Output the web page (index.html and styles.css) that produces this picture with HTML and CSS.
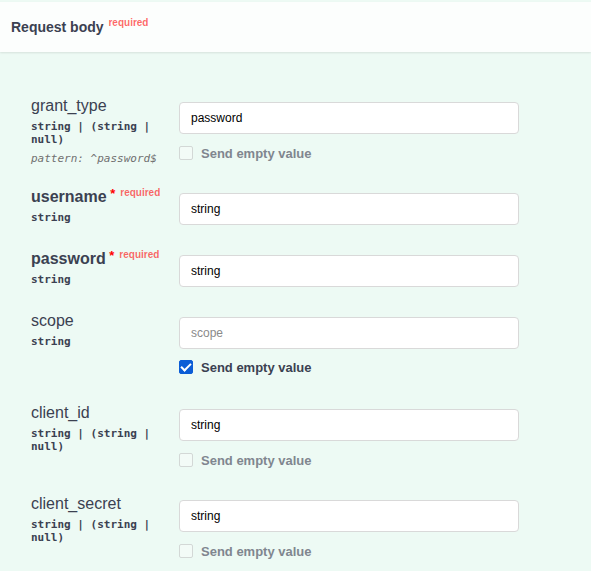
FILE: index.html
```html
<!DOCTYPE html>
<html>
<head>
<meta charset="utf-8">
<link rel="stylesheet" href="styles.css">
</head>
<body>
<div class="section">
  <div class="section-header">
    <h4 class="title">Request body <span class="req-badge">required</span></h4>
  </div>
  <div class="params">
    <div class="row">
      <div class="col-name">
        <div class="pname">grant_type</div>
        <div class="ptype">string | (string | null)</div>
        <div class="ppattern">pattern: ^password$</div>
      </div>
      <div class="col-desc">
        <input class="field" type="text" value="password">
        <label class="toggle disabled"><input type="checkbox" class="cb" disabled><span>Send empty value</span></label>
      </div>
    </div>
    <div class="row">
      <div class="col-name">
        <div class="pname required">username<span class="star">&nbsp;*</span><span class="req">required</span></div>
        <div class="ptype">string</div>
      </div>
      <div class="col-desc">
        <input class="field" type="text" value="string">
      </div>
    </div>
    <div class="row">
      <div class="col-name">
        <div class="pname required">password<span class="star">&nbsp;*</span><span class="req">required</span></div>
        <div class="ptype">string</div>
      </div>
      <div class="col-desc">
        <input class="field" type="text" value="string">
      </div>
    </div>
    <div class="row">
      <div class="col-name">
        <div class="pname">scope</div>
        <div class="ptype">string</div>
      </div>
      <div class="col-desc">
        <input class="field" type="text" placeholder="scope">
        <label class="toggle active"><input type="checkbox" class="cb" checked><span>Send empty value</span></label>
      </div>
    </div>
    <div class="row">
      <div class="col-name">
        <div class="pname">client_id</div>
        <div class="ptype">string | (string | null)</div>
      </div>
      <div class="col-desc">
        <input class="field" type="text" value="string">
        <label class="toggle disabled"><input type="checkbox" class="cb" disabled><span>Send empty value</span></label>
      </div>
    </div>
    <div class="row">
      <div class="col-name">
        <div class="pname">client_secret</div>
        <div class="ptype">string | (string | null)</div>
      </div>
      <div class="col-desc">
        <input class="field" type="text" value="string">
        <label class="toggle disabled"><input type="checkbox" class="cb" disabled><span>Send empty value</span></label>
      </div>
    </div>
  </div>
</div>
</body>
</html>
```

FILE: styles.css
```css
html, body {
  margin: 0;
  padding: 0;
}
body {
  background: #edfaf4;
  font-family: "Liberation Sans", Arial, sans-serif;
  color: #3b4151;
  width: 591px;
  height: 571px;
  overflow: hidden;
}
.section {
  padding-top: 2px;
}
.section-header {
  display: flex;
  align-items: center;
  height: 50px;
  padding: 0 11px;
  background: rgba(255, 255, 255, 0.8);
  box-shadow: 0 1px 2px rgba(0, 0, 0, 0.1);
}
.title {
  margin: 0;
  font-size: 14px;
  font-weight: bold;
  color: #3b4151;
}
.req-badge {
  font-size: 10px;
  color: rgba(255, 0, 0, 0.6);
  position: relative;
  top: -6px;
  margin-left: 1px;
}
.params {
  padding: 35px 0 0 31px;
}
.row {
  display: grid;
  grid-template-columns: 148px 340px;
  align-items: start;
}
.col-name {
  padding: 10px 0;
}
.pname {
  font-size: 16px;
  line-height: 18px;
  height: 18px;
  color: #3b4151;
}
.pname.required {
  font-weight: bold;
}
.star {
  color: red;
  font-size: 13px;
  line-height: 0;
  position: relative;
  top: -4px;
}
.req {
  font-size: 10px;
  font-weight: bold;
  line-height: 0;
  color: rgba(255, 0, 0, 0.6);
  position: relative;
  top: -6px;
  padding-left: 5px;
}
.ptype {
  font-family: "DejaVu Sans Mono", monospace;
  font-weight: bold;
  font-size: 11px;
  line-height: 13px;
  padding: 5px 20px 5px 0;
  color: #3b4151;
}
.ppattern {
  font-family: "DejaVu Sans Mono", monospace;
  font-style: italic;
  font-size: 11px;
  line-height: 13px;
  margin-top: 1px;
  color: #707070;
}
.col-desc {
  display: flex;
  flex-direction: column;
  padding: 10px 0;
}
.field {
  box-sizing: border-box;
  width: 340px;
  height: 32px;
  margin: 5px 0;
  padding: 0 11px;
  border: 1px solid #d9d9d9;
  border-radius: 4px;
  background: #fff;
  font-family: "Liberation Sans", Arial, sans-serif;
  font-size: 12px;
  color: #000;
  outline: none;
}
.field::placeholder {
  color: #8a8a8a;
}
.toggle {
  display: flex;
  align-items: flex-start;
  height: 29px;
  box-sizing: border-box;
  padding-top: 7px;
  font-size: 13px;
  line-height: 15px;
  font-weight: bold;
  color: #3b4151;
}
.toggle.active {
  height: 30px;
  padding-top: 6px;
}
.toggle.disabled {
  color: #80868f;
}
.cb {
  appearance: none;
  -webkit-appearance: none;
  box-sizing: border-box;
  width: 14px;
  height: 14px;
  margin: 0 8px 0 0;
  border: 1px solid #d3d8d6;
  border-radius: 2px;
  background: #f3fbf7;
  position: relative;
  flex: none;
}
.cb:checked {
  background: #0c5dd6;
  border-color: #0c5dd6;
}
.cb:checked::after {
  content: "";
  position: absolute;
  left: 3px;
  top: 0px;
  width: 4px;
  height: 8px;
  border: solid #fff;
  border-width: 0 2px 2px 0;
  transform: rotate(45deg);
}
```
